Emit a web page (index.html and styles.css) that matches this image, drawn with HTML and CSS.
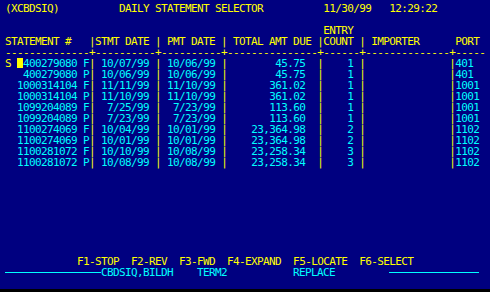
FILE: index.html
```
<!DOCTYPE html>
<html>
   <head>
      <meta name="viewport" content="width=device-width, initial-scale=1">
      <link rel="stylesheet" href="styles.css">
   </head>
   <body>
      <div class="screen">
<pre class="term"><span class="y">(XCBDSIQ)          DAILY STATEMENT SELECTOR          11/30/99   12:29:22</span>

<span class="y">                                                     ENTRY</span>
<span class="y">STATEMENT #   |STMT DATE | PMT DATE | TOTAL AMT DUE |COUNT | IMPORTER      PORT</span>
<span class="y">--------------+----------+----------+---------------+------+--------------+-----</span>
<span class="y">S </span><span class="cursor"></span><span class="c">400279080 F</span><span class="y">|</span><span class="c"> 10/07/99 </span><span class="y">|</span><span class="c"> 10/06/99 </span><span class="y">|</span><span class="c">        45.75  </span><span class="y">|</span><span class="c">    1 </span><span class="y">|</span>              <span class="y">|</span><span class="c">401</span>
<span class="c">   400279080 P</span><span class="y">|</span><span class="c"> 10/06/99 </span><span class="y">|</span><span class="c"> 10/06/99 </span><span class="y">|</span><span class="c">        45.75  </span><span class="y">|</span><span class="c">    1 </span><span class="y">|</span>              <span class="y">|</span><span class="c">401</span>
<span class="c">  1000314104 F</span><span class="y">|</span><span class="c"> 11/11/99 </span><span class="y">|</span><span class="c"> 11/10/99 </span><span class="y">|</span><span class="c">       361.02  </span><span class="y">|</span><span class="c">    1 </span><span class="y">|</span>              <span class="y">|</span><span class="c">1001</span>
<span class="c">  1000314104 P</span><span class="y">|</span><span class="c"> 11/10/99 </span><span class="y">|</span><span class="c"> 11/10/99 </span><span class="y">|</span><span class="c">       361.02  </span><span class="y">|</span><span class="c">    1 </span><span class="y">|</span>              <span class="y">|</span><span class="c">1001</span>
<span class="c">  1099204089 F</span><span class="y">|</span><span class="c">  7/25/99 </span><span class="y">|</span><span class="c">  7/23/99 </span><span class="y">|</span><span class="c">       113.60  </span><span class="y">|</span><span class="c">    1 </span><span class="y">|</span>              <span class="y">|</span><span class="c">1001</span>
<span class="c">  1099204089 P</span><span class="y">|</span><span class="c">  7/23/99 </span><span class="y">|</span><span class="c">  7/23/99 </span><span class="y">|</span><span class="c">       113.60  </span><span class="y">|</span><span class="c">    1 </span><span class="y">|</span>              <span class="y">|</span><span class="c">1001</span>
<span class="c">  1100274069 F</span><span class="y">|</span><span class="c"> 10/04/99 </span><span class="y">|</span><span class="c"> 10/01/99 </span><span class="y">|</span><span class="c">    23,364.98  </span><span class="y">|</span><span class="c">    2 </span><span class="y">|</span>              <span class="y">|</span><span class="c">1102</span>
<span class="c">  1100274069 P</span><span class="y">|</span><span class="c"> 10/01/99 </span><span class="y">|</span><span class="c"> 10/01/99 </span><span class="y">|</span><span class="c">    23,364.98  </span><span class="y">|</span><span class="c">    2 </span><span class="y">|</span>              <span class="y">|</span><span class="c">1102</span>
<span class="c">  1100281072 F</span><span class="y">|</span><span class="c"> 10/10/99 </span><span class="y">|</span><span class="c"> 10/08/99 </span><span class="y">|</span><span class="c">    23,258.34  </span><span class="y">|</span><span class="c">    3 </span><span class="y">|</span>              <span class="y">|</span><span class="c">1102</span>
<span class="c">  1100281072 P</span><span class="y">|</span><span class="c"> 10/08/99 </span><span class="y">|</span><span class="c"> 10/08/99 </span><span class="y">|</span><span class="c">    23,258.34  </span><span class="y">|</span><span class="c">    3 </span><span class="y">|</span>              <span class="y">|</span><span class="c">1102</span>








<span class="y">            F1-STOP  F2-REV  F3-FWD  F4-EXPAND  F5-LOCATE  F6-SELECT</span>
<span class="rule left"></span><span class="c">CBDSIQ,BILDH    TERM2           REPLACE         </span><span class="rule right"></span></pre>
      </div>
   </body>
</html>
```

FILE: styles.css
```
html, body {
margin: 0;
padding: 0;
background-color: #000;
}
.screen {
box-sizing: border-box;
height: 289px;
padding: 3px 0 0 5px;
background-color: #000080;
overflow: hidden;
}
.term {
margin: 0;
font-family: "DejaVu Sans Mono", monospace;
font-size: 11px;
line-height: 11px;
letter-spacing: -0.62px;
color: #0ff;
white-space: pre;
}
.y, .c {
display: inline-block;
height: 11px;
vertical-align: top;
}
.y {
color: #ff0;
}
.c {
color: #0ff;
}
.cursor {
display: inline-block;
width: 6px;
height: 10px;
background-color: #ff0;
vertical-align: -1px;
}
.rule {
display: inline-block;
height: 0;
border-top: 1px solid #0ff;
vertical-align: 3px;
}
.rule.left {
width: 96px;
}
.rule.right {
width: 90px;
}
```
